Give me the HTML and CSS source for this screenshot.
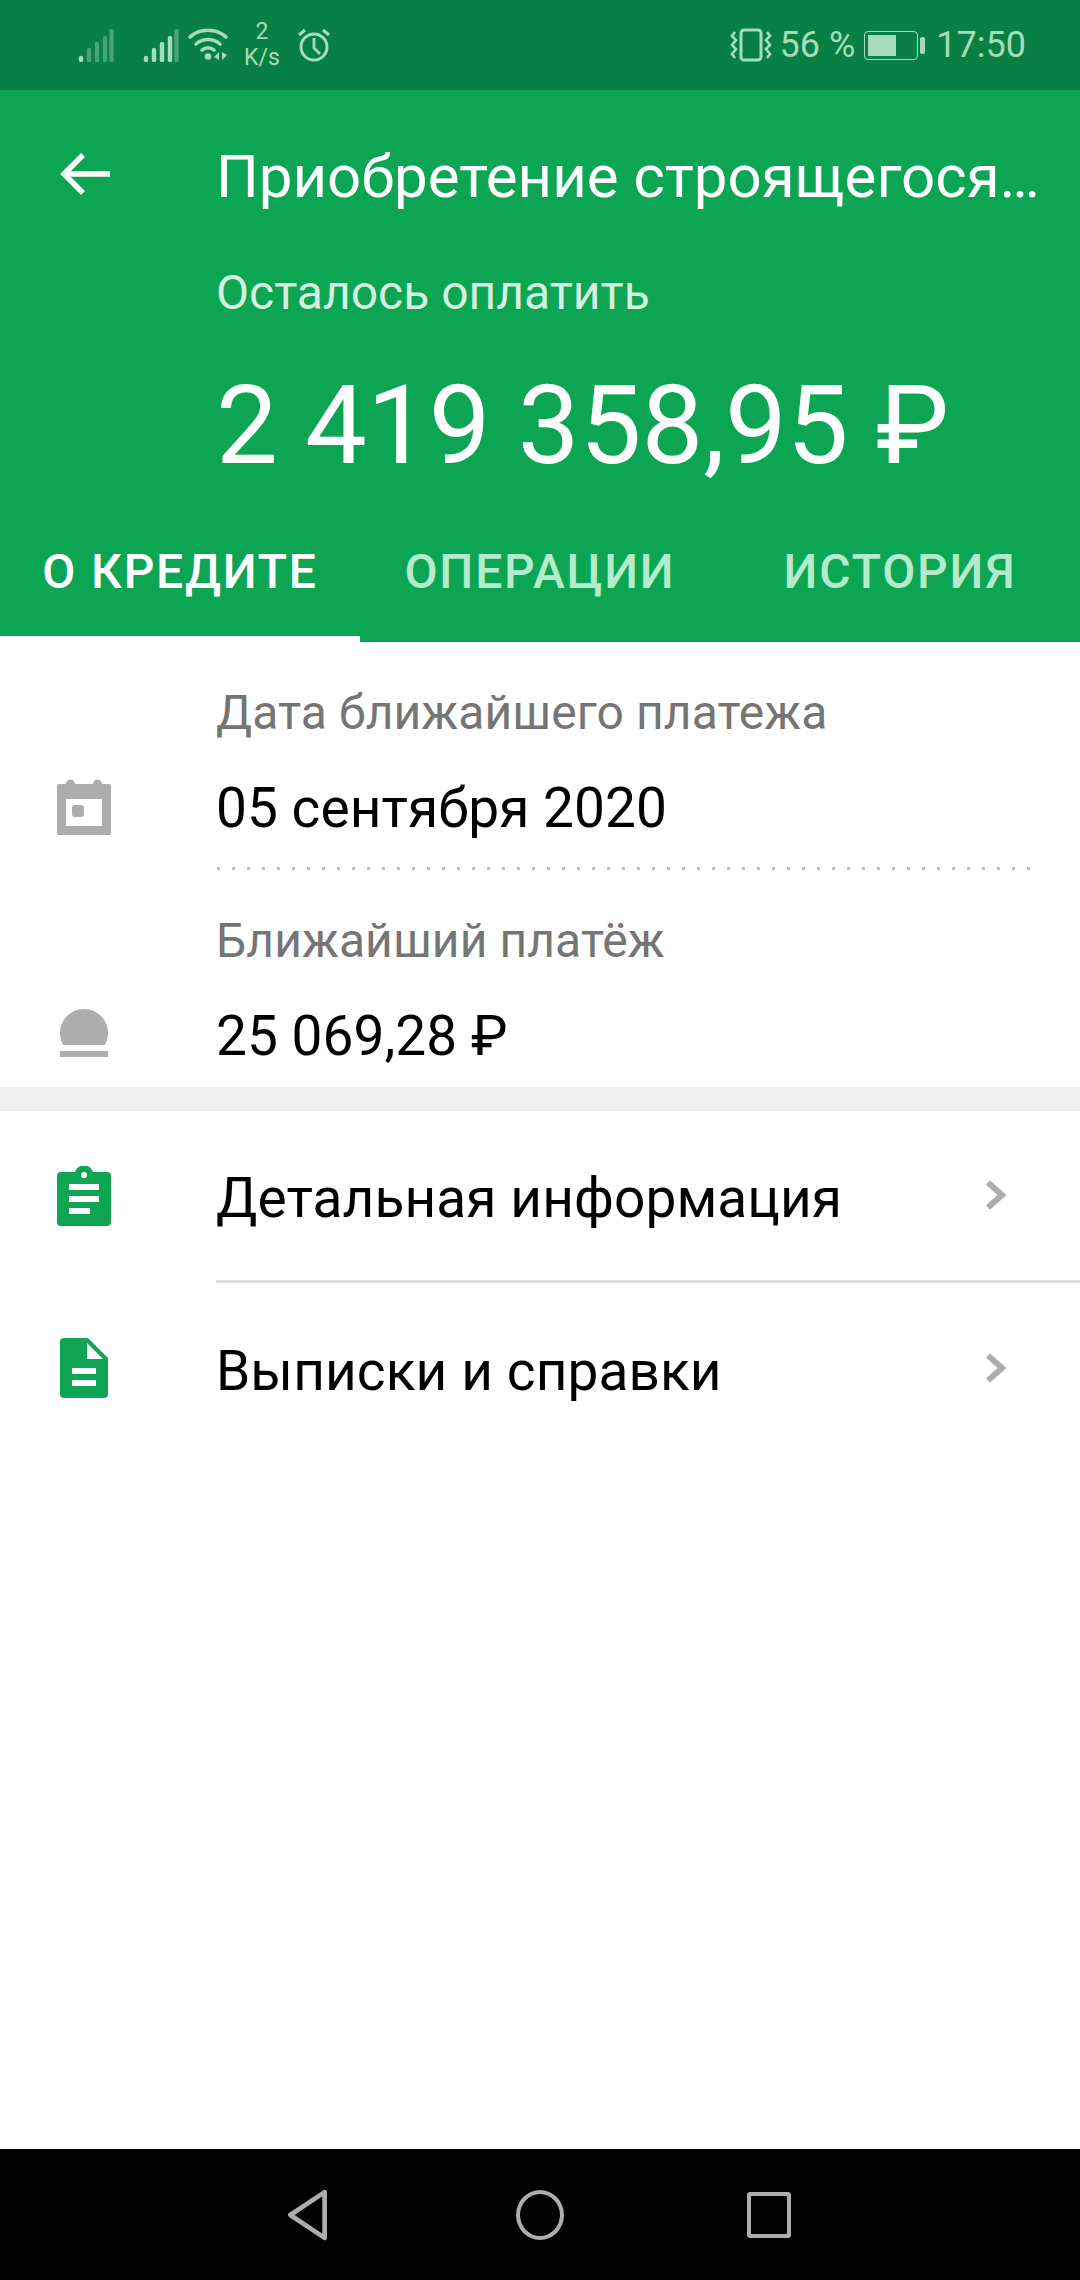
FILE: index.html
```html
<!DOCTYPE html>
<html lang="ru">
<head>
  <meta charset="UTF-8">
  <meta name="viewport" content="width=device-width, initial-scale=1.0">
  <title>О кредите</title>
  <link rel="stylesheet" href="styles.css">
</head>
<body>

  <div class="screen">

    <div class="status-bar">
      <div class="status-left">
        <svg class="icon-signal" viewBox="0 0 36 34">
          <g fill="none" stroke="#a5dcb8" stroke-width="4.4" stroke-linecap="round">
            <path d="M3 32v-2"/>
            <path d="M11 32v-10" opacity=".4"/>
            <path d="M19 32V16" opacity=".4"/>
            <path d="M27 32V10" opacity=".4"/>
            <path d="M33.500 32V3" opacity=".4"/>
          </g>
        </svg>
        <svg class="icon-signal second" viewBox="0 0 36 34">
          <g fill="none" stroke="#a5dcb8" stroke-width="4.4" stroke-linecap="round">
            <path d="M3 32v-2"/>
            <path d="M11 32v-10"/>
            <path d="M19 32V16"/>
            <path d="M27 32V10"/>
            <path d="M33.500 32V3" opacity=".4"/>
          </g>
        </svg>
        <svg class="icon-wifi" viewBox="0 0 40 34">
          <g fill="none" stroke="#a5dcb8" stroke-width="3.600" stroke-linecap="round">
            <path d="M2 9C12 0 28 0 38 9"/>
            <path d="M8 16c7-6 17-6 24 0"/>
            <path d="M14 22c3.500-3 8.500-3 12 0"/>
          </g>
          <circle cx="20" cy="28.500" r="3.300" fill="#a5dcb8"/>
          <path d="M31 24v8l-5-3zM34 24v8l5-5z" fill="#a5dcb8"/>
        </svg>
        <div class="speed"><span>2</span><span>K/s</span></div>
        <svg class="icon-alarm" viewBox="0 0 34 34">
          <g fill="none" stroke="#a5dcb8" stroke-width="3">
            <circle cx="17" cy="19" r="13"/>
            <path d="M17 10v10l6 6" stroke-width="2.800"/>
            <path d="M2 7l6-5M32 7l-6-5" stroke-width="3"/>
          </g>
        </svg>
      </div>
      <div class="status-right">
        <svg class="icon-vibrate" viewBox="0 0 42 34">
          <rect x="11" y="2" width="20" height="30" rx="3" fill="none" stroke="#a5dcb8" stroke-width="3"/>
          <g fill="none" stroke="#a5dcb8" stroke-width="2.600">
            <path d="M5 4L2 8l4 4-4 5 4 4-4 5 3 4"/>
            <path d="M37 4l3 4-4 4 4 5-4 4 4 5-3 4"/>
          </g>
        </svg>
        <span class="battery-pct">56 %</span>
        <div class="battery">
          <div class="battery-body"><div class="battery-fill"></div></div>
          <div class="battery-nub"></div>
        </div>
        <span class="clock">17:50</span>
      </div>
    </div>

    <div class="header">
      <div class="title-row">
        <svg class="icon-back" viewBox="0 0 50 44">
          <path d="M4 22h46M23 3L4 22l19 19" fill="none" stroke="#fff" stroke-width="5.500"/>
        </svg>
        <div class="title">Приобретение строящегося…</div>
      </div>
      <div class="sub">Осталось оплатить</div>
      <div class="amount">2 419 358,95 ₽</div>
      <div class="tabs">
        <div class="tab active">О КРЕДИТЕ</div>
        <div class="tab">ОПЕРАЦИИ</div>
        <div class="tab">ИСТОРИЯ</div>
      </div>
    </div>

    <div class="info">
      <div class="info-row">
        <div class="info-label">Дата ближайшего платежа</div>
        <svg class="icon-side" viewBox="0 0 54 58">
          <path d="M9 6a4.500 4.500 0 0 1 9 0h18a4.500 4.500 0 0 1 9 0h7a2 2 0 0 1 2 2v47a2 2 0 0 1-2 2H2a2 2 0 0 1-2-2V8a2 2 0 0 1 2-2z" fill="#adadad"/>
          <rect x="9" y="21" width="36" height="27" fill="#fff"/>
          <rect x="15" y="27" width="12" height="12" rx="3" fill="#adadad"/>
        </svg>
        <div class="info-value">05 сентября 2020</div>
      </div>
      <div class="dots"></div>
      <div class="info-row">
        <div class="info-label">Ближайший платёж</div>
        <svg class="icon-side" viewBox="0 0 54 58">
          <path d="M6.200 39A24 24 0 1 1 47.800 39z" fill="#adadad"/>
          <rect x="3" y="45" width="48" height="6" fill="#adadad"/>
        </svg>
        <div class="info-value">25 069,28 ₽</div>
      </div>
    </div>

    <div class="band"></div>

    <div class="menu">
      <div class="menu-row">
        <svg class="icon-side" viewBox="0 0 54 60">
          <path fill-rule="evenodd" d="M4 6h14a9.500 9.500 0 0 1 18 0h14a4 4 0 0 1 4 4v46a4 4 0 0 1-4 4H4a4 4 0 0 1-4-4V10a4 4 0 0 1 4-4zM27 6a3 3 0 1 0 0 6 3 3 0 0 0 0-6z" fill="#10a555"/>
          <path d="M12 18h30v6H12zM12 30h30v6H12zM12 42h21v6H12z" fill="#fff"/>
        </svg>
        <div class="menu-body line">
          <div class="menu-text">Детальная информация</div>
          <svg class="icon-chevron" viewBox="0 0 20 30">
            <path d="M2 2.500l14 12.500L2 27.500" fill="none" stroke="#adadad" stroke-width="6"/>
          </svg>
        </div>
      </div>
      <div class="menu-row">
        <svg class="icon-side" viewBox="0 0 54 60">
          <path d="M7 0h24l20 20v36a4 4 0 0 1-4 4H7a4 4 0 0 1-4-4V4a4 4 0 0 1 4-4z" fill="#10a555"/>
          <path d="M30 5l16 16H30z" fill="#fff"/>
          <path d="M15 30h24v6H15zM15 42h24v6H15z" fill="#fff"/>
        </svg>
        <div class="menu-body">
          <div class="menu-text">Выписки и справки</div>
          <svg class="icon-chevron" viewBox="0 0 20 30">
            <path d="M2 2.500l14 12.500L2 27.500" fill="none" stroke="#adadad" stroke-width="6"/>
          </svg>
        </div>
      </div>
    </div>

    <div class="nav-bar">
      <svg class="nav-back" viewBox="0 0 40 50">
        <path d="M36 3L3 25l33 22z" fill="none" stroke="#adadad" stroke-width="4.500" stroke-linejoin="round"/>
      </svg>
      <div class="nav-home"></div>
      <div class="nav-square"></div>
    </div>

  </div>

</body>
</html>
```

FILE: styles.css
```css
* {
  box-sizing: border-box;
}

body {
  margin: 0;
  padding: 0;
  font-family: Roboto, "Noto Sans", sans-serif;
  background-color: #fff;
}

.screen {
  width: 1080px;
  height: 2280px;
  display: flex;
  flex-direction: column;
  overflow: hidden;
}

/* status bar */
.status-bar {
  height: 90px;
  flex: none;
  background-color: #088043;
  color: #a5dcb8;
  display: flex;
  justify-content: space-between;
  align-items: center;
  padding: 0 54px 0 78px;
}

.status-left, .status-right {
  display: flex;
  align-items: center;
}

.icon-signal {
  width: 36px;
  height: 34px;
}

.icon-signal.second {
  margin-left: 29px;
}

.icon-wifi {
  width: 40px;
  height: 34px;
  margin-left: 9px;
}

.speed {
  width: 38px;
  margin-left: 15px;
  display: flex;
  flex-direction: column;
  align-items: center;
  font-size: 23px;
  line-height: 26px;
}

.icon-alarm {
  width: 34px;
  height: 34px;
  margin-left: 16px;
}

.icon-vibrate {
  width: 42px;
  height: 34px;
}

.battery-pct {
  font-size: 36px;
  margin-left: 8px;
}

.battery {
  display: flex;
  align-items: center;
  margin-left: 9px;
}

.battery-body {
  width: 54px;
  height: 29px;
  border: 1.500px solid #a5dcb8;
  border-radius: 4px;
  padding: 3px;
}

.battery-fill {
  width: 28px;
  height: 100%;
  background-color: #a5dcb8;
}

.battery-nub {
  width: 5px;
  height: 17px;
  margin-left: 2px;
  border-radius: 2px;
  background-color: #a5dcb8;
}

.clock {
  font-size: 36px;
  margin-left: 11px;
}

/* green header */
.header {
  flex: none;
  height: 552px;
  background-color: #0ca553;
  color: #fff;
  display: flex;
  flex-direction: column;
}

.title-row {
  display: flex;
  align-items: center;
  height: 173px;
  padding-left: 60px;
}

.icon-back {
  width: 50px;
  height: 44px;
  flex: none;
  margin-top: -5px;
}

.title {
  margin-left: 106px;
  font-size: 60px;
  white-space: nowrap;
}

.sub {
  margin: 2px 0 0 216px;
  font-size: 48px;
  line-height: 56px;
  color: #d5f0df;
}

.amount {
  margin: 41px 0 0 216px;
  font-size: 110px;
  line-height: 128px;
}

.tabs {
  display: flex;
  height: 152px;
  font-size: 48px;
  font-weight: 500;
  letter-spacing: 1.800px;
  color: #b2eccb;
}

.tab {
  width: 360px;
  height: 152px;
  padding-top: 53px;
  text-align: center;
}

.tab.active {
  color: #fff;
  background: linear-gradient(to top, #fff 6px, transparent 6px);
}

/* info rows */
.info {
  flex: none;
  height: 445px;
  background-color: #fff;
}

.info-row {
  display: grid;
  grid-template-columns: 216px 1fr;
  padding-top: 43px;
}

.icon-side {
  width: 54px;
  height: 58px;
  flex: none;
  margin-left: 57px;
}

.info-row .icon-side {
  grid-column: 1;
  align-self: center;
  margin-top: -3px;
}

.info-label {
  grid-column: 2;
  font-size: 48px;
  line-height: 56px;
  margin-bottom: 35px;
  color: #757575;
  letter-spacing: 0.1px;
}

.info-value {
  grid-column: 2;
  font-size: 55px;
  line-height: 64px;
  color: #000;
  letter-spacing: 0.05px;
}

.dots {
  width: 815px;
  height: 3px;
  margin: 27px 0 0 217px;
  background-image: linear-gradient(to right, #bdbdbd 3px, transparent 3px);
  background-size: 15px 3px;
}

.band {
  flex: none;
  height: 24px;
  background-color: #f0f0f0;
}

/* menu */
.menu {
  flex: 1;
  background-color: #fff;
}

.menu-row {
  display: flex;
  align-items: center;
  height: 172px;
}

.menu-row .icon-side {
  height: 60px;
  margin-top: -3px;
}

.menu-body {
  flex: 1;
  align-self: stretch;
  margin-left: 105px;
  padding-right: 74px;
  display: flex;
  justify-content: space-between;
  align-items: center;
}

.menu-body.line {
  border-bottom: 3px solid #ddd;
}

.menu-text {
  font-size: 55px;
  color: #000;
  margin-top: 4px;
  letter-spacing: 0.1px;
}

.icon-chevron {
  width: 20px;
  height: 30px;
  flex: none;
  margin-top: -2px;
}

/* bottom nav */
.nav-bar {
  flex: none;
  height: 131px;
  background-color: #000;
  display: flex;
  align-items: center;
  padding-left: 286px;
}

.nav-back {
  width: 44px;
  height: 52px;
}

.nav-home {
  width: 48px;
  height: 50px;
  margin-left: 186px;
  border: 4.500px solid #adadad;
  border-radius: 50%;
}

.nav-square {
  width: 44px;
  height: 46px;
  margin-left: 183px;
  border: 4.500px solid #adadad;
  border-radius: 3px;
}
```
